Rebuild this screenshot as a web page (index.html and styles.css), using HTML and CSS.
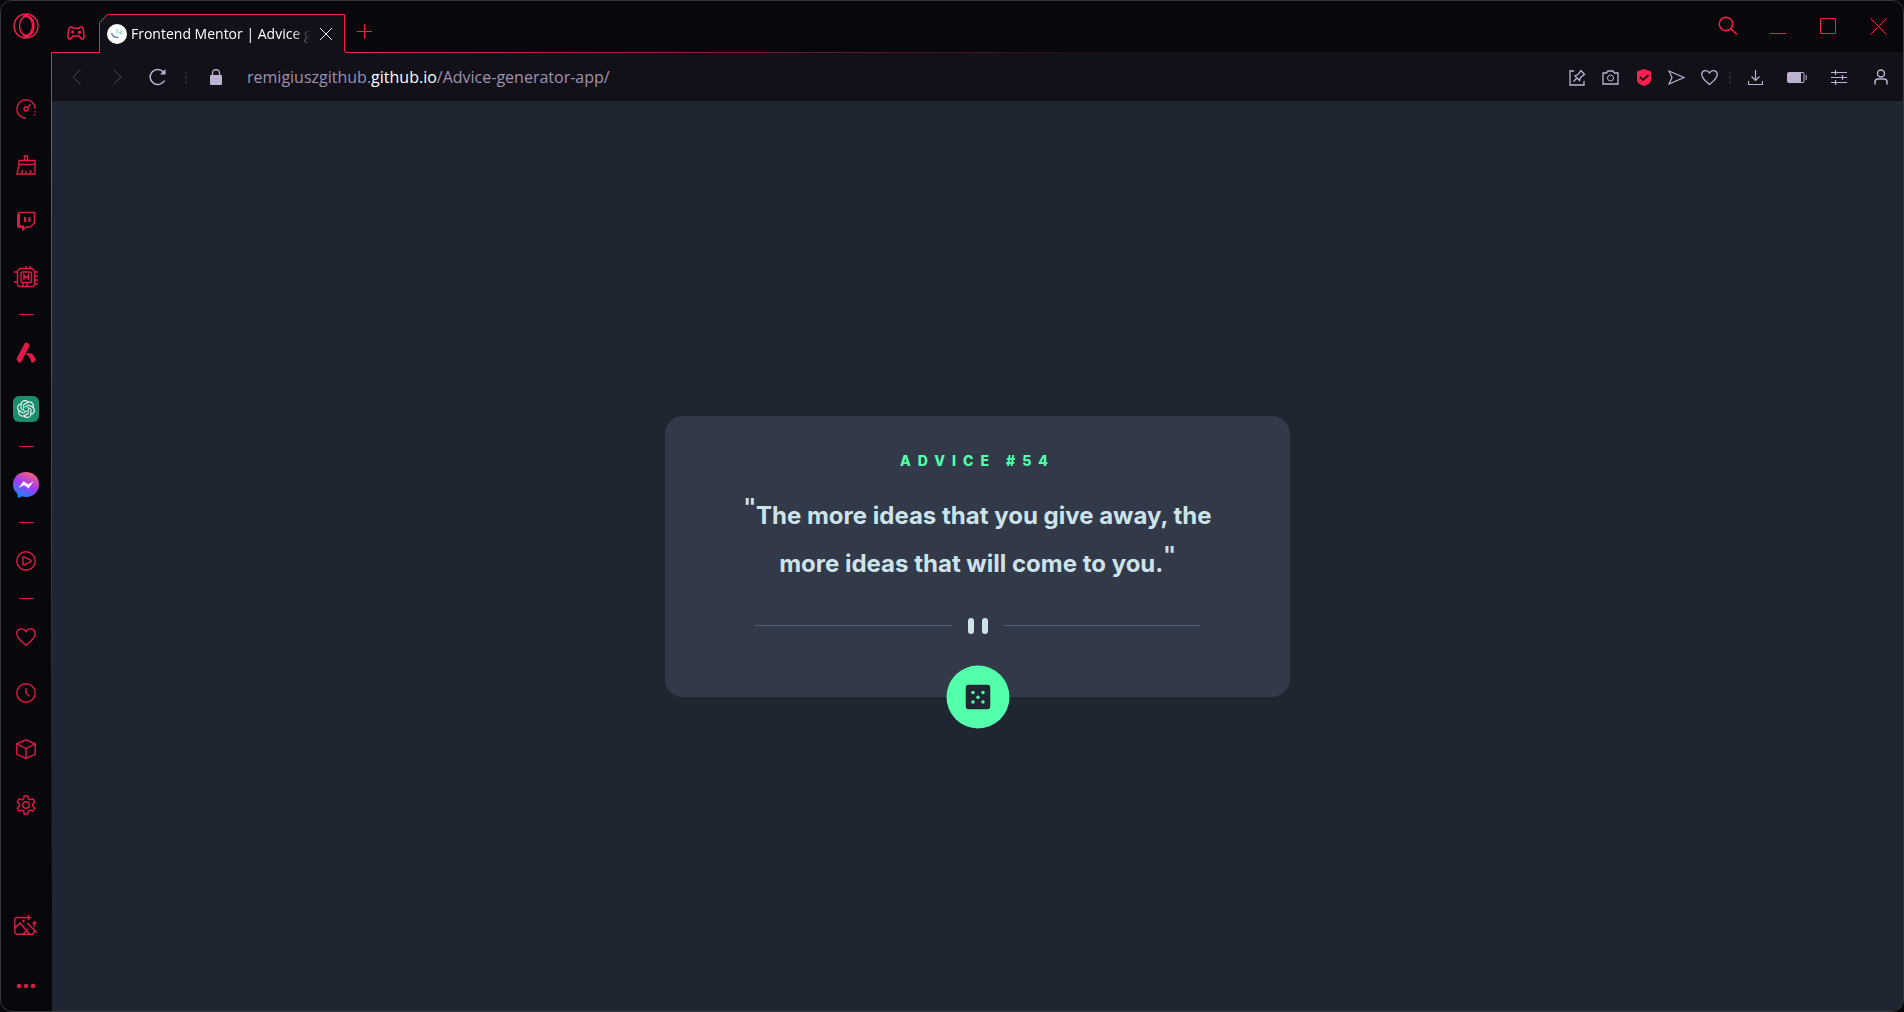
FILE: index.html
```html
<!DOCTYPE html>
<html lang="en">
<head>
<meta charset="utf-8">
<title>Frontend Mentor | Advice generator app</title>
<link rel="stylesheet" href="styles.css">
</head>
<body>
<div class="window">
  <nav class="sidebar" aria-label="Sidebar">
    <button class="opera" aria-label="Menu"><svg width="26" height="26" viewBox="0 0 26 26"><circle cx="13" cy="13" r="12"/><ellipse cx="13" cy="13" rx="6.5" ry="9.5"/><path d="M10 3.6c3-1.8 5.5-1.5 8 1.2 4 4.6 4 11.8 0 16.4-2.5 2.7-5 3-8 1.2"/></svg></button>
    <div class="side-items">
      <button aria-label="Speed"><svg width="20" height="20" viewBox="0 0 20 20"><path d="M10 19.200a9.200 9.200 0 1 1 9.200-9.200"/><path d="M19 12v1.500M18.800 15v1.500" /><circle cx="10" cy="10" r="2"/><path d="M11.500 8.500L14.500 5.500"/></svg></button>
      <button aria-label="Cleaner"><svg width="20" height="20" viewBox="0 0 20 20"><path d="M8.500 5.500V1h3v4.500M3 5.500h16v4H3zM3 9.500L1 19h18V9.500M5.500 19l1-4M10 19v-3M14.500 19v-4"/></svg></button>
      <button aria-label="Twitch"><svg width="20" height="20" viewBox="0 0 20 20"><path d="M3 1.500h15.500V12L14 16h-4l-3 3v-3H2V4z"/><path stroke-width="3" d="M2.500 3v12"/><path stroke-width="2" d="M9 6v5M13.500 6v5M3 15.500h4V18"/></svg></button>
      <button aria-label="Modules"><svg width="24" height="24" viewBox="0 0 24 24"><path d="M6 3.500h12l2.500 2.500v14l-1.500 1.500H5L3.500 20V6z"/><rect x="7" y="7" width="10.5" height="10.500" rx="2"/><path d="M10 15v-5l2.200 3 2.300-3v5M9 17.500v4M12 1v2.500M16 1v2.500M13 17.500v4M0 7h3.500M0 17h3.500M20.500 7H24M20.500 11H24M20.500 15H24M20.500 19H24"/></svg></button>
      <hr>
      <button aria-label="Aria"><svg width="20" height="22" viewBox="0 0 20 22"><path class="solid" d="M9 .8h3L13.600 4 5 20.500H2.500L.4 17zM10 11.500C15 10 18.500 13 19.800 18l-2 2.500h-2.300C14.800 17 13 14 10 11.500z"/></svg></button>
      <button aria-label="ChatGPT"><svg width="26" height="26" viewBox="0 0 26 26"><rect class="gpt" width="26" height="26" rx="6"/><svg class="knot" x="4" y="4" width="18" height="18" viewBox="0 0 24 24"><path d="M22.2819 9.8211a5.9847 5.9847 0 0 0-.5157-4.9108 6.0462 6.0462 0 0 0-6.5098-2.9A6.0651 6.0651 0 0 0 4.9807 4.1818a5.9847 5.9847 0 0 0-3.9977 2.9 6.0462 6.0462 0 0 0 .7427 7.0966 5.98 5.98 0 0 0 .511 4.9107 6.051 6.051 0 0 0 6.5146 2.9001A5.9847 5.9847 0 0 0 13.2599 24a6.0557 6.0557 0 0 0 5.7718-4.2058 5.9894 5.9894 0 0 0 3.9977-2.9001 6.0557 6.0557 0 0 0-.7475-7.0729zm-9.022 12.6081a4.4755 4.4755 0 0 1-2.8764-1.0408l.1419-.0804 4.7783-2.7582a.7948.7948 0 0 0 .3927-.6813v-6.7369l2.02 1.1686a.071.071 0 0 1 .038.052v5.5826a4.504 4.504 0 0 1-4.4945 4.4944zm-9.6607-4.1254a4.4708 4.4708 0 0 1-.5346-3.0137l.142.0852 4.783 2.7582a.7712.7712 0 0 0 .7806 0l5.8428-3.3685v2.3324a.0804.0804 0 0 1-.0332.0615L9.74 19.9502a4.4992 4.4992 0 0 1-6.1408-1.6464zM2.3408 7.8956a4.485 4.485 0 0 1 2.3655-1.9728V11.6a.7664.7664 0 0 0 .3879.6765l5.8144 3.3543-2.0201 1.1685a.0757.0757 0 0 1-.071 0l-4.8303-2.7865A4.504 4.504 0 0 1 2.3408 7.872zm16.5963 3.8558L13.1038 8.364 15.1192 7.2a.0757.0757 0 0 1 .071 0l4.8303 2.7913a4.4944 4.4944 0 0 1-.6765 8.1042v-5.6772a.79.79 0 0 0-.407-.667zm2.0107-3.0231l-.142-.0852-4.7735-2.7818a.7759.7759 0 0 0-.7854 0L9.409 9.2297V6.8974a.0662.0662 0 0 1 .0284-.0615l4.8303-2.7866a4.4992 4.4992 0 0 1 6.6802 4.66zM8.3065 12.863l-2.02-1.1638a.0804.0804 0 0 1-.038-.0567V6.0742a4.4992 4.4992 0 0 1 7.3757-3.4537l-.142.0805L8.704 5.459a.7948.7948 0 0 0-.3927.6813zm1.0976-2.3654l2.602-1.4998 2.6069 1.4998v2.9994l-2.5974 1.4997-2.6067-1.4997z"/></svg></svg></button>
      <hr>
      <button aria-label="Messenger"><svg width="26" height="26" viewBox="0 0 26 26"><defs><linearGradient id="msg" x1=".25" y1="1" x2=".75" y2="0"><stop offset="0" stop-color="#0a8cff"/><stop offset=".5" stop-color="#a03af5"/><stop offset="1" stop-color="#ff6470"/></linearGradient></defs><path fill="url(#msg)" stroke="none" d="M13 0C5.500 0 0 5.300 0 12.500c0 3.800 1.600 6.900 4.300 9.100L5 26l4-1.700c1.300.4 2.600.6 4 .6 7.500 0 13-5.400 13-12.500S20.500 0 13 0z"/><path fill="#f2eefa" stroke="none" d="M5.500 16l5-7 4.500 3.300L20.500 9.500l-5 7-4.500-3.300z"/></svg></button>
      <hr>
      <button aria-label="Player"><svg width="20" height="20" viewBox="0 0 20 20"><circle cx="10" cy="10" r="9.2"/><path d="M7 6.200v7.600h1.500L15 10.500v-1L8.500 6.200z"/></svg></button>
      <hr>
      <button aria-label="Pinboards"><svg width="20" height="20" viewBox="0 0 20 20"><path d="M10 18.300C6.500 15.500.8 11.500.8 6.600.8 1.300 7.500.3 10 4.600 12.500.3 19.200 1.300 19.200 6.600c0 4.900-5.700 8.900-9.200 11.700z"/></svg></button>
      <button aria-label="History"><svg width="20" height="20" viewBox="0 0 20 20"><circle cx="10" cy="10" r="9.2"/><path d="M10 5v5l3.500 3.500"/></svg></button>
      <button aria-label="Extensions"><svg width="20" height="20" viewBox="0 0 20 20"><path d="M10 .8l9.200 4v10.500L10 19.300.8 15.300V4.800zM.8 4.800L10 9.500l9.200-4.700M10 9.500v9.800"/></svg></button>
      <button aria-label="Settings"><svg width="20" height="20" viewBox="0 0 20 20"><path d="M8.300 1h3.400l.8 3 1.400.8 3.100-.9 1.700 3-2.200 2.200v1.800l2.200 2.200-1.700 3-3.100-.9-1.400.8-.8 3H8.300l-.8-3-1.400-.8-3.100.9-1.700-3 2.200-2.200V9.100L1.300 6.900l1.700-3 3.100.9 1.400-.8z"/><circle cx="10" cy="10" r="3.2"/></svg></button>
    </div>
    <div class="side-foot">
      <button aria-label="Wallpaper"><svg width="24" height="20" viewBox="0 0 24 20"><path d="M12 2.500H3A2.200 2.200 0 0 0 .8 4.700V17A2.200 2.200 0 0 0 3 19.200h15A2.200 2.200 0 0 0 20 17v-1M1 13l5-5 9 10.500M9 19l5-5M13 8l10 9.500M20 9.500V12"/><circle class="solid" cx="9.5" cy="6" r="1.3"/><path d="M14.500 0v5M12 2.500h5M20.500 6v4M18.500 8h4"/></svg></button>
      <button aria-label="More"><svg width="20" height="6" viewBox="0 0 20 6"><g class="solid"><circle cx="3" cy="3" r="2.2"/><circle cx="10" cy="3" r="2.2"/><circle cx="17" cy="3" r="2.2"/></g></svg></button>
    </div>
  </nav>
  <div class="main">
    <header class="tabbar">
      <button class="corner" aria-label="GX Corner"><svg width="18" height="14" viewBox="0 0 18 14"><path d="M5 1L6.500 2.200h5L13 1h2l1.500 3L17.200 11 16 13h-1.500L12 10H6l-2.500 3H2L.8 11 1.500 4 3 1zM5.500 4.500v3M4 6h3"/><circle cx="12.5" cy="6.500" r="1"/></svg></button>
      <div class="tab">
        <svg class="tab-shape" width="248" height="39" viewBox="0 0 248 39"><path class="tab-fill" d="M1 39V8.500L8.500 1H246v38z"/><path class="tab-line" d="M0 38.500h.5V8.500L8.500.5H245.500V37l1.500 1.500h1"/></svg>
        <svg class="favicon" width="20" height="20" viewBox="0 0 20 20"><circle cx="10" cy="10" r="10" fill="#fff"/><path fill="none" stroke="#6d7fae" stroke-width="1.500" d="M4.500 9c1 3 3.500 4.800 7 4.500"/><path fill="none" stroke="#8fd3dc" stroke-width="1.300" d="M10 5v4.500M15.500 7L12.500 8.700l3 1.500"/></svg>
        <span class="tab-title">Frontend Mentor | Advice generator app</span>
        <button class="tab-close" aria-label="Close tab"><svg width="14" height="14" viewBox="0 0 14 14"><path d="M1 1l12 12M13 1L1 13"/></svg></button>
      </div>
      <button class="new-tab" aria-label="New tab"><svg width="15" height="15" viewBox="0 0 15 15"><path d="M7.500 0v15M0 7.500h15"/></svg></button>
      <div class="controls">
        <button aria-label="Search tabs"><svg width="20" height="20" viewBox="0 0 20 20"><g stroke-width="1.500"><circle cx="8" cy="8" r="6.700"/><path d="M13 13l6 5.500"/></g></svg></button>
        <button class="minimize" aria-label="Minimize"><svg width="16" height="16" viewBox="0 0 16 16"><path d="M0 15.500h16"/></svg></button>
        <button aria-label="Maximize"><svg width="16" height="16" viewBox="0 0 16 16"><path d="M.5.5h15v15H.5z"/></svg></button>
        <button aria-label="Close"><svg width="17" height="17" viewBox="0 0 17 17"><path d="M.5.5l16 16M16.500.5l-16 16"/></svg></button>
      </div>
    </header>
    <div class="toolbar">
      <button class="nav dim" aria-label="Back"><svg width="9" height="16" viewBox="0 0 9 16"><path d="M8.500.5L1 8l7.500 7.500"/></svg></button>
      <button class="nav dim" aria-label="Forward"><svg width="9" height="16" viewBox="0 0 9 16"><path d="M.5.5L8 8 .5 15.500"/></svg></button>
      <button class="nav" aria-label="Reload"><svg width="18" height="18" viewBox="0 0 18 18"><path stroke-width="1.500" d="M15.500 12.500A7.600 7.600 0 1 1 14.500 4"/><path class="solid" d="M16.500 1v5.500H11z"/></svg></button>
      <span class="dots"></span>
      <svg class="lock" width="12" height="16" viewBox="0 0 12 16"><rect class="solid" y="6" width="12" height="10" rx="1"/><path stroke-width="1.300" d="M2.500 6V4a3.500 3.500 0 0 1 7 0v2"/></svg>
      <a class="url" href="#">remigiuszgithub.<b>github.io</b>/Advice-generator-app/</a>
      <div class="tools">
        <button aria-label="Pin"><svg width="17" height="17" viewBox="0 0 17 17"><path stroke-width="1.300" d="M5 2H1v14h14v-4M4.500 12.500l3-3M6 7l4.500 4.500 1-3L15.500 5.500 12 1.500 9 5.500z"/></svg></button>
        <button aria-label="Snapshot"><svg width="17" height="15" viewBox="0 0 17 15"><path stroke-width="1.300" d="M1 3h3.500L6 1h5l1.500 2H16v11H1z"/><circle cx="8.5" cy="8" r="3"/></svg></button>
        <button aria-label="Ad blocker"><svg width="14" height="17" viewBox="0 0 14 17"><path fill="#ff1f50" stroke="none" d="M7 0l7 2.500V11c0 3-3.500 4.800-7 6-3.500-1.200-7-3-7-6V2.500z"/><path stroke="#121019" stroke-width="1.800" d="M3 8l3 3 5.500-5"/></svg></button>
        <button aria-label="Send"><svg width="17" height="15" viewBox="0 0 17 15"><path stroke-width="1.200" d="M1 1l15 6.500L1 14l3-6.500z"/></svg></button>
        <button aria-label="Bookmark"><svg width="17" height="16" viewBox="0 0 20 19"><path stroke-width="1.500" d="M10 18.300C6.500 15.500.8 11.500.8 6.600.8 1.300 7.500.3 10 4.600 12.500.3 19.200 1.300 19.200 6.600c0 4.900-5.700 8.900-9.200 11.700z"/></svg></button>
      </div>
      <span class="dots"></span>
      <div class="tools wide">
        <button aria-label="Downloads"><svg width="15" height="16" viewBox="0 0 15 16"><path stroke-width="1.200" d="M7.500 1v10M3.500 7.500l4 4 4-4M.5 12v3.500h14V12"/></svg></button>
        <button aria-label="Battery"><svg width="20" height="11" viewBox="0 0 20 11"><rect x=".5" y=".5" width="16.5" height="10" rx="1"/><path class="solid" d="M1 1h13v9H1z"/><path d="M19.200 3v5"/></svg></button>
        <button aria-label="Easy setup"><svg width="16" height="15" viewBox="0 0 16 15"><path stroke-width="1.200" d="M0 2.500h16M0 7.500h16M0 12.500h16M4.500 0v5M11.500 5v5M4.500 10v5"/></svg></button>
        <button aria-label="Profile"><svg width="14" height="16" viewBox="0 0 14 16"><g stroke-width="1.500"><circle cx="7" cy="4.500" r="3.500"/><path d="M1 15.500V13c0-2 1.500-3 3-3h6c1.500 0 3 1 3 3v2.500"/></g></svg></button>
      </div>
    </div>
    <main class="page">
      <section class="card">
        <h1>Advice #54</h1>
        <p><span class="mark">"</span>The more ideas that you give away, the more ideas that will come to you.<span class="mark">"</span></p>
        <div class="divider"><i></i><i></i></div>
        <button class="dice" aria-label="New advice"><svg width="25" height="25" viewBox="0 0 25 25"><rect width="25" height="25" rx="4" fill="#202733"/><g fill="#53ffaa"><circle cx="7.5" cy="8" r="1.700"/><circle cx="17.500" cy="8" r="1.700"/><circle cx="12.500" cy="12.700" r="1.700"/><circle cx="7.500" cy="17.500" r="1.700"/><circle cx="17.500" cy="17.500" r="1.700"/></g></svg></button>
      </section>
    </main>
  </div>
</div>
</body>
</html>
```
FILE: styles.css
```css
* { box-sizing: border-box; }
body { margin: 0; background: #08070c; font-family: "Open Sans", "Noto Sans", sans-serif; }
button { display: flex; align-items: center; justify-content: center; margin: 0; padding: 0; border: 0; background: none; color: inherit; }
svg { display: block; flex: none; fill: none; stroke: currentColor; }
.solid { fill: currentColor; stroke: none; }
.favicon, .dice svg { stroke: none; }

.window { display: flex; min-height: 100vh; border: 1px solid #35353a; border-radius: 12px; overflow: hidden; background: #08070c; }

/* Sidebar */
.sidebar { position: relative; display: flex; flex-direction: column; width: 51px; color: #e01b47; }
.sidebar::after { content: ""; position: absolute; top: 51px; right: 0; bottom: 0; width: 1px; background: linear-gradient(#fa1e4e, #b01a3e 40%, #08070c 90%); }
.sidebar svg { stroke-width: 1.4; }
.sidebar button { width: 50px; height: 56px; }
.sidebar .opera { height: 50px; margin-bottom: 30px; color: #fa1e4e; }
.side-items hr { width: 15px; height: 1px; margin: 9px 18px 10px; border: 0; background: #e01b47; }
.side-foot { display: flex; flex-direction: column; gap: 11px; margin-top: auto; }
.sidebar .side-foot button { height: 50px; }
.gpt { fill: #1b8c6c; stroke: none; }
.knot { fill: #e6f4ef; stroke: none; }

.main { flex: 1; display: flex; flex-direction: column; min-width: 0; }

/* Tab strip */
.tabbar { position: relative; display: flex; align-items: flex-end; height: 52px; color: #fa1e4e; }
.tabbar::before { content: ""; position: absolute; left: 0; right: 0; bottom: 0; height: 1px; background: linear-gradient(90deg, #fa1e4e 16%, #121019 58%); }
.corner { width: 47px; height: 41px; }
.corner svg { stroke-width: 1.4; }
.tab { position: relative; display: flex; align-items: center; width: 248px; height: 39px; padding: 0 11px 0 8px; }
.tab-shape { position: absolute; left: 0; top: 0; }
.tab-fill { fill: #121019; stroke: none; }
.favicon, .tab-title, .tab-close { position: relative; }
.tab-title { flex: 1; margin: 0 6px 0 4px; overflow: hidden; white-space: nowrap; font-size: 14px; line-height: 22px; color: #fff; -webkit-mask-image: linear-gradient(90deg, #000 90%, transparent); mask-image: linear-gradient(90deg, #000 90%, transparent); }
.tab-close { width: 20px; height: 20px; color: #e8e6ee; }
.new-tab { width: 34px; height: 43px; }
.controls { display: flex; align-self: flex-start; margin-left: auto; }
.controls button { width: 50px; height: 50px; }

/* Address bar */
.toolbar { display: flex; align-items: center; height: 48px; background: #121019; color: #bdb3d0; }
.nav { width: 41px; height: 48px; padding-left: 7px; }
.dim { color: #46434f; }
.dots { width: 2px; height: 13px; margin: 0 3px; background: repeating-linear-gradient(#2a2735 0 3px, transparent 3px 5px); }
.nav + .dots { margin-left: 10px; }
.lock { margin: 0 25px 0 20px; }
.url { font-size: 16px; line-height: 22px; color: #9d93b0; text-decoration: none; white-space: nowrap; }
.url b { font-weight: 400; color: #fff; }
.tools { display: flex; margin-left: auto; }
.tools button { width: 33px; height: 48px; }
.wide { margin: 0 1px 0 0; }
.wide button { width: 42px; }

/* Page */
.page { flex: 1; display: flex; align-items: center; justify-content: center; background: #1f2632; }
.card { position: relative; width: 625px; padding: 34px 72px 63px; border-radius: 18px; background: #323a49; font-family: Inter, sans-serif; text-align: center; }
.card h1 { margin: 0; font-size: 14px; line-height: 22px; font-weight: 800; letter-spacing: 7px; text-transform: uppercase; color: #53ffaa; }
.card p { margin: 20px 0 0; font-size: 24px; line-height: 48px; font-weight: 700; color: #cee3e9; }
.mark { font-family: "DejaVu Sans", sans-serif; line-height: 24px; vertical-align: 8px; }
.divider { display: flex; align-items: center; justify-content: center; gap: 8px; height: 16px; margin: 30px 18px 0; }
.divider i { width: 6px; height: 16px; border-radius: 3px; background: #cee3e9; }
.divider::before, .divider::after { content: ""; flex: 1; height: 1px; margin: 0 8px; background: #4f5d74; }
.divider::before { margin-left: 0; }
.divider::after { margin-right: 0; }
.dice { position: absolute; left: 50%; bottom: 0; width: 63px; height: 63px; border-radius: 50%; background: #53ffaa; transform: translate(-50%, 50%); }
```
